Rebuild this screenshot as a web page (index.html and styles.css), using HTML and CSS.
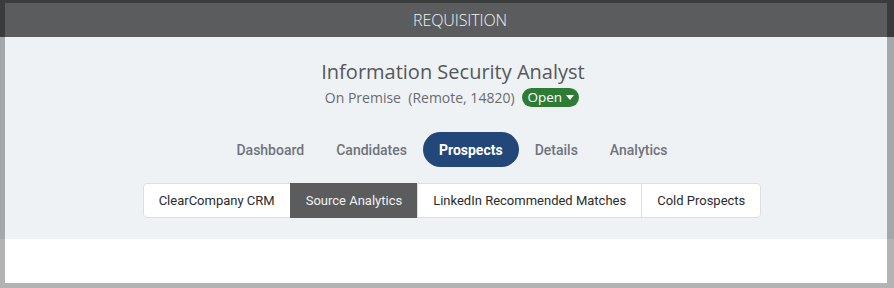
FILE: index.html
```html
<!DOCTYPE html>
<html>
<head>
<meta charset="utf-8">
<link rel="stylesheet" href="styles.css">
</head>
<body>
  <div class="band band-top">
    <header class="header">REQUISITION</header>
  </div>
  <div class="band band-mid">
    <section class="hero">
      <h1 class="title">Information Security Analyst</h1>
      <div class="sub">
        <span class="loc">On Premise&nbsp; (Remote, 14820)</span>
        <span class="badge">Open <svg class="caret" width="8" height="5" viewBox="0 0 8 5"><path d="M0 0h8L4 5z" fill="#fff"/></svg></span>
      </div>
      <nav class="nav">
        <a class="nav-item">Dashboard</a>
        <a class="nav-item">Candidates</a>
        <a class="nav-item active">Prospects</a>
        <a class="nav-item">Details</a>
        <a class="nav-item">Analytics</a>
      </nav>
      <div class="tabs">
        <a class="tab">ClearCompany CRM</a>
        <a class="tab active">Source Analytics</a>
        <a class="tab">LinkedIn Recommended Matches</a>
        <a class="tab">Cold Prospects</a>
      </div>
    </section>
  </div>
  <div class="band band-bottom">
    <div class="content"></div>
  </div>
</body>
</html>
```
FILE: styles.css
```css
html, body {
  margin: 0;
  padding: 0;
}
body {
  width: 894px;
  height: 288px;
  overflow: hidden;
  font-family: "Open Sans", "Liberation Sans", sans-serif;
}
.band {
  padding: 0 7px 0 5px;
}
.band-top {
  background: #3a3b3d;
  padding-top: 3px;
}
.header {
  height: 34px;
  background: #5b5c5e;
  color: #f2f2f2;
  font-size: 16px;
  line-height: 34px;
  text-align: center;
  padding-left: 28px;
  letter-spacing: -0.1px;
  font-weight: 300;
}
.band-mid {
  background: #a5a8aa;
}
.hero {
  background: #eef2f5;
  padding: 22px 0 21px 12px;
  display: flex;
  flex-direction: column;
  align-items: center;
}
.title {
  margin: 0;
  font-size: 20px;
  line-height: 26px;
  font-weight: 400;
  color: #565759;
  padding-left: 2px;
}
.sub {
  margin-top: 2px;
  height: 20px;
  display: flex;
  align-items: center;
  gap: 7px;
  font-size: 14px;
  color: #6a6b6d;
}
.badge {
  background: #2e7b36;
  color: #fff;
  border-radius: 10px;
  height: 19px;
  line-height: 19px;
  padding: 0 5px 0 6px;
  font-size: 13.5px;
  display: inline-flex;
  align-items: center;
  gap: 4px;
}
.caret {
  display: block;
}
.nav {
  margin-top: 25px;
  display: flex;
  font-family: Roboto, "Liberation Sans", sans-serif;
  font-size: 14px;
  font-weight: 500;
}
.nav-item {
  height: 35px;
  line-height: 36px;
  padding: 0 16px;
  color: #70747b;
  border-radius: 18px;
}
.nav-item.active {
  background: #24477a;
  color: #fff;
  font-weight: 700;
}
.tabs {
  margin-top: 16px;
  display: flex;
  background: #fff;
  border: 1px solid #dcdfe2;
  border-radius: 4px;
  font-family: Roboto, "Liberation Sans", sans-serif;
  font-size: 13px;
  color: #2b2b2b;
}
.tab {
  height: 33px;
  line-height: 33px;
  padding: 0 15px;
  border-left: 1px solid #dcdfe2;
}
.tab:first-child {
  border-left: none;
}
.tab.active {
  background: #5b5c5e;
  color: #f2f2f2;
  border-left-color: #5b5c5e;
  height: 35px;
  margin: -1px 0;
  line-height: 35px;
}
.band-bottom {
  background: #b3b3b3;
  padding-bottom: 5px;
}
.content {
  background: #fff;
  height: 44px;
}
```
